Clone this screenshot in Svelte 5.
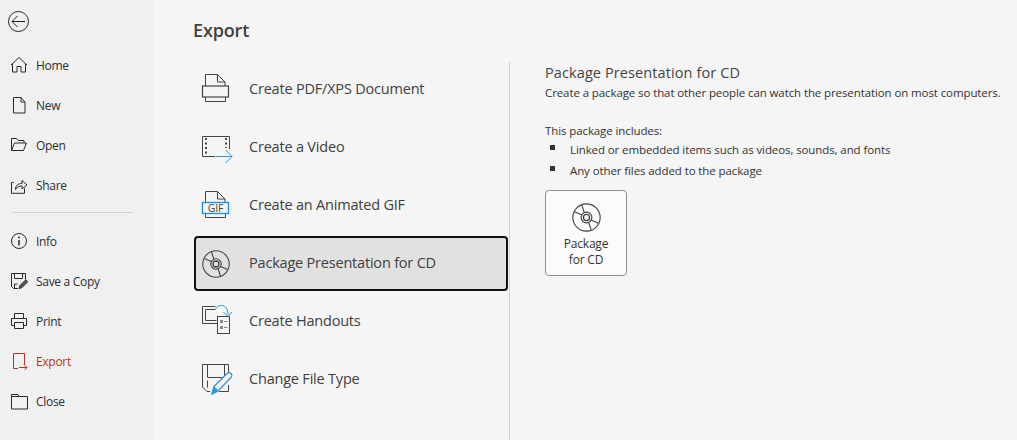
<script>
  const top = [
    { id: 'home', label: 'Home' },
    { id: 'new', label: 'New' },
    { id: 'open', label: 'Open' },
    { id: 'share', label: 'Share' }
  ];
  const bottom = [
    { id: 'info', label: 'Info' },
    { id: 'copy', label: 'Save a Copy' },
    { id: 'print', label: 'Print' },
    { id: 'export', label: 'Export', active: true },
    { id: 'close', label: 'Close' }
  ];
  const exportsList = [
    { id: 'pdf', label: 'Create PDF/XPS Document' },
    { id: 'video', label: 'Create a Video' },
    { id: 'gif', label: 'Create an Animated GIF' },
    { id: 'cd', label: 'Package Presentation for CD', selected: true },
    { id: 'handouts', label: 'Create Handouts' },
    { id: 'type', label: 'Change File Type' }
  ];
</script>

{#snippet navIcon(id)}
  <svg class="nav-icon" viewBox="0 0 18 18" width="18" height="18" fill="none" stroke="currentColor" stroke-width="1">
    {#if id === 'home'}
      <path d="M1 9 9 1.500 17 9M2.500 7.500v8.500h4.500V10.500h4V16h4.500V7.500" />
    {:else if id === 'new'}
      <path d="M3.500 1.500h7.500l4 4.500v11H3.500zM11 1.500V6h4" />
    {:else if id === 'open'}
      <path d="M1.500 14.500v-12h5l1.500 2h6v2.500M1.500 14.500h12l3-7.500H4.500z" />
    {:else if id === 'share'}
      <path d="M1.500 6.500v10.800h13v-5M5.500 13.500c0-4 2.500-6 6.500-6V4.500l5 4.500-5 4v-3c-3 0-5 1-6.500 3.500zM1.500 6.500h2" />
    {:else if id === 'info'}
      <circle cx="9" cy="9" r="7.500" />
      <path d="M9 8v5.500" stroke-width="1.500" />
      <circle cx="9" cy="5.500" r="1" fill="currentColor" stroke="none" />
    {:else if id === 'copy'}
      <path d="M8 16.500H3.500l-2-2V1.500h14v6M4.500 1.500v5h8v-5M4.500 16v-4h3" />
      <path d="M9 16.500l.8-2.800 6-6 2 2-6 6z" fill="#555" stroke="#333" />
    {:else if id === 'print'}
      <path d="M4.500 6V1.500h9V6M4.500 13.500h-3V6.500h15v7h-3M4.500 10.500h9v6h-9z" />
    {:else if id === 'export'}
      <path d="M8 16.500H3.500V1.500h11v11.500M9 15.500h8M14 12.500l3 3-3 3" />
    {:else if id === 'close'}
      <path d="M1.500 2.500h6.500l1 2h8.500V17H1.500zM1.500 4.500H9" />
    {/if}
  </svg>
{/snippet}

{#snippet disc(size)}
  <svg viewBox="0 0 28 28" width={size} height={size} fill="none" stroke="#444" stroke-width="1.100">
    <circle cx="14" cy="14" r="13.200" />
    <circle cx="14" cy="14" r="5.200" />
    <circle cx="14" cy="14" r="3" stroke-width="1.300" />
    <path d="M9.500 2l2.500 7.500M2.500 8.500l7 3M18.500 26l-2.500-7.500M25.500 19.500l-7-3" />
  </svg>
{/snippet}

{#snippet exportIcon(id)}
  {#if id === 'cd'}
    <span class="disc-offset">{@render disc(28)}</span>
  {:else}
    <svg class="big" viewBox="0 0 33 33" width="33" height="33" fill="none" stroke="#444" stroke-width="1">
      {#if id === 'pdf'}
        <path d="M4.500 13V1.500h12l7.500 7.500v4M16.500 1.500V9H24" />
        <rect x="1.500" y="13" width="26" height="11" stroke-width="1.200" />
        <path d="M4.500 24v4.500h20V24" />
      {:else if id === 'video'}
        <path d="M14 25.500H1.500v-20h27v12.500" />
        <path d="M5 7v17M25 7v10" stroke-width="2" stroke-dasharray="2 2.500" />
        <path d="M15 25.500h16M24.500 19l6.500 6.500-6.500 6.500" stroke="#2f95dc" />
      {:else if id === 'gif'}
        <path d="M4.500 13.500V2.500h12l7.500 7.500v3.500M16.500 2.500V10H24M4.500 24.500v4h20v-4" />
        <rect x="1.500" y="13.500" width="26" height="11" stroke="#1e8fd5" stroke-width="1.300" />
        <text x="14.500" y="23" class="gif">GIF</text>
      {:else if id === 'handouts'}
        <path d="M16 18.500H1.500V1.500h13" />
        <path d="M4.500 4.500h10M4.500 4.500v11h11" />
        <rect x="16.500" y="11.500" width="12" height="17" />
        <rect x="19" y="15" width="3" height="3" fill="#888" stroke="none" />
        <rect x="19" y="21" width="3" height="3" fill="#888" stroke="none" />
        <path d="M23 16.500h3.500M23 22.500h3.500" stroke="#888" />
        <path d="M14.500 4.500C15.500 1.500 18 0.500 20.500 0.500c4 0 6.500 3.500 6.500 9.500M22.500 7l4.500 4.500L31 7" stroke="#2f95dc" />
      {:else if id === 'type'}
        <path d="M9 28.500H6l-4.500-4.500V1.500h26v10M27.500 22v6.500H18M6.500 1.500v13h17v-13M6.500 17.500v7" />
        <path d="M11 31l2-7.500 13-13c1-1 3-1 4 0s1 3 0 4L17 28z" fill="#f5f5f5" stroke="#2f95dc" stroke-width="1.300" />
        <path d="M11 31l2-7.500 4 4.500z" fill="#2f95dc" stroke="#2f95dc" />
      {/if}
    </svg>
  {/if}
{/snippet}

<div class="shell">
  <nav class="sidebar">
    <button class="back" aria-label="Back">
      <svg viewBox="0 0 21 21" width="21" height="21" fill="none" stroke="#222" stroke-width="1">
        <circle cx="10.500" cy="10.500" r="10" />
        <path d="M4 10.500h13M9.500 5 4 10.500 9.500 16" />
      </svg>
    </button>
    <ul class="nav">
      {#each top as item}
        <li class="nav-item">{@render navIcon(item.id)}<span>{item.label}</span></li>
      {/each}
    </ul>
    <hr class="sep" />
    <ul class="nav">
      {#each bottom as item}
        <li class="nav-item" class:active={item.active}>{@render navIcon(item.id)}<span>{item.label}</span></li>
      {/each}
    </ul>
  </nav>

  <main class="main">
    <h1>Export</h1>
    <div class="columns">
      <ul class="list">
        {#each exportsList as e}
          <li class="row" class:selected={e.selected}>
            <span class="row-icon">{@render exportIcon(e.id)}</span>
            <span class="row-label">{e.label}</span>
          </li>
        {/each}
      </ul>
      <section class="detail">
        <h2>Package Presentation for CD</h2>
        <p class="lead">Create a package so that other people can watch the presentation on most computers.</p>
        <p class="inc">This package includes:</p>
        <ul class="bullets">
          <li>Linked or embedded items such as videos, sounds, and fonts</li>
          <li>Any other files added to the package</li>
        </ul>
        <button class="pkg">
          {@render disc(29)}
          <span>Package<br />for CD</span>
        </button>
      </section>
    </div>
  </main>
</div>

<style>
  :global(body) {
    margin: 0;
    background: #f5f5f5;
  }
  .shell {
    display: flex;
    width: 1017px;
    height: 440px;
    overflow: hidden;
    font-family: "Open Sans", "Noto Sans", sans-serif;
    color: #3a3a3a;
    background: #f5f5f5;
  }
  ul {
    list-style: none;
    margin: 0;
    padding: 0;
  }
  .sidebar {
    width: 153px;
    flex: none;
    background: #f0f0f0;
    padding-top: 11px;
    box-sizing: border-box;
  }
  .back {
    display: block;
    width: 21px;
    height: 22px;
    margin: 0 0 12px 8px;
    padding: 0;
    border: 0;
    background: none;
  }
  .nav-item {
    height: 40px;
    display: flex;
    align-items: center;
    gap: 8px;
    padding-left: 10px;
    font-size: 12px;
    letter-spacing: -0.3px;
    color: #2e2e2e;
  }
  .nav-icon {
    flex: none;
    color: #2a2a2a;
  }
  .active,
  .active .nav-icon {
    color: #b7361d;
  }
  .sep {
    border: 0;
    border-top: 1px solid #d2d2d2;
    margin: 7px 20px 8px 13px;
  }
  .main {
    flex: 1;
    padding-top: 18px;
  }
  h1 {
    margin: 0 0 20px 40px;
    font-size: 18px;
    line-height: 24px;
    font-weight: 600;
    letter-spacing: -0.15px;
    color: #404040;
  }
  .columns {
    display: flex;
  }
  .list {
    width: 315px;
    margin-left: 41px;
    flex: none;
  }
  .row {
    box-sizing: border-box;
    width: 314px;
    height: 55px;
    margin-bottom: 3px;
    padding-left: 5px;
    border: 2px solid transparent;
    border-radius: 4px;
    display: flex;
    align-items: center;
    font-size: 14.500px;
    letter-spacing: -0.2px;
    color: #404040;
  }
  .row-label {
    position: relative;
    top: -1px;
  }
  .selected {
    background: #e1e1e1;
    border-color: #111;
  }
  .row-icon {
    width: 48px;
    flex: none;
    display: flex;
    align-items: center;
  }
  .disc-offset {
    display: flex;
    margin-left: 1px;
  }
  .detail {
    border-left: 1px solid #d2d2d2;
    padding: 0 0 0 35px;
    flex: 1;
    height: 378px;
  }
  h2 {
    margin: 0;
    padding-top: 1px;
    font-size: 14.500px;
    line-height: 20px;
    font-weight: 400;
    letter-spacing: 0.1px;
    color: #444;
  }
  .lead, .inc, .bullets {
    font-size: 11.500px;
    letter-spacing: -0.1px;
    color: #333;
  }
  .lead {
    margin: 1px 0 0;
    line-height: 18px;
    white-space: nowrap;
  }
  .inc {
    margin: 20px 0 0;
    line-height: 18px;
  }
  .bullets {
    margin-top: -1px;
  }
  .bullets li {
    position: relative;
    padding-left: 25px;
    line-height: 21px;
  }
  .bullets li::before {
    content: "";
    position: absolute;
    left: 5px;
    top: 6px;
    width: 5px;
    height: 5px;
    background: #333;
  }
  .pkg {
    display: flex;
    flex-direction: column;
    align-items: center;
    gap: 4px;
    box-sizing: border-box;
    width: 82px;
    height: 86px;
    margin-top: 9px;
    padding: 12px 0 0;
    border: 1px solid #8f8f8f;
    border-radius: 4px;
    background: #fbfbfb;
    font: inherit;
    font-size: 12px;
    line-height: 16px;
    letter-spacing: -0.2px;
    color: #333;
  }
  .gif {
    font-size: 10.500px;
    fill: #444;
    stroke: none;
    text-anchor: middle;
  }
</style>
